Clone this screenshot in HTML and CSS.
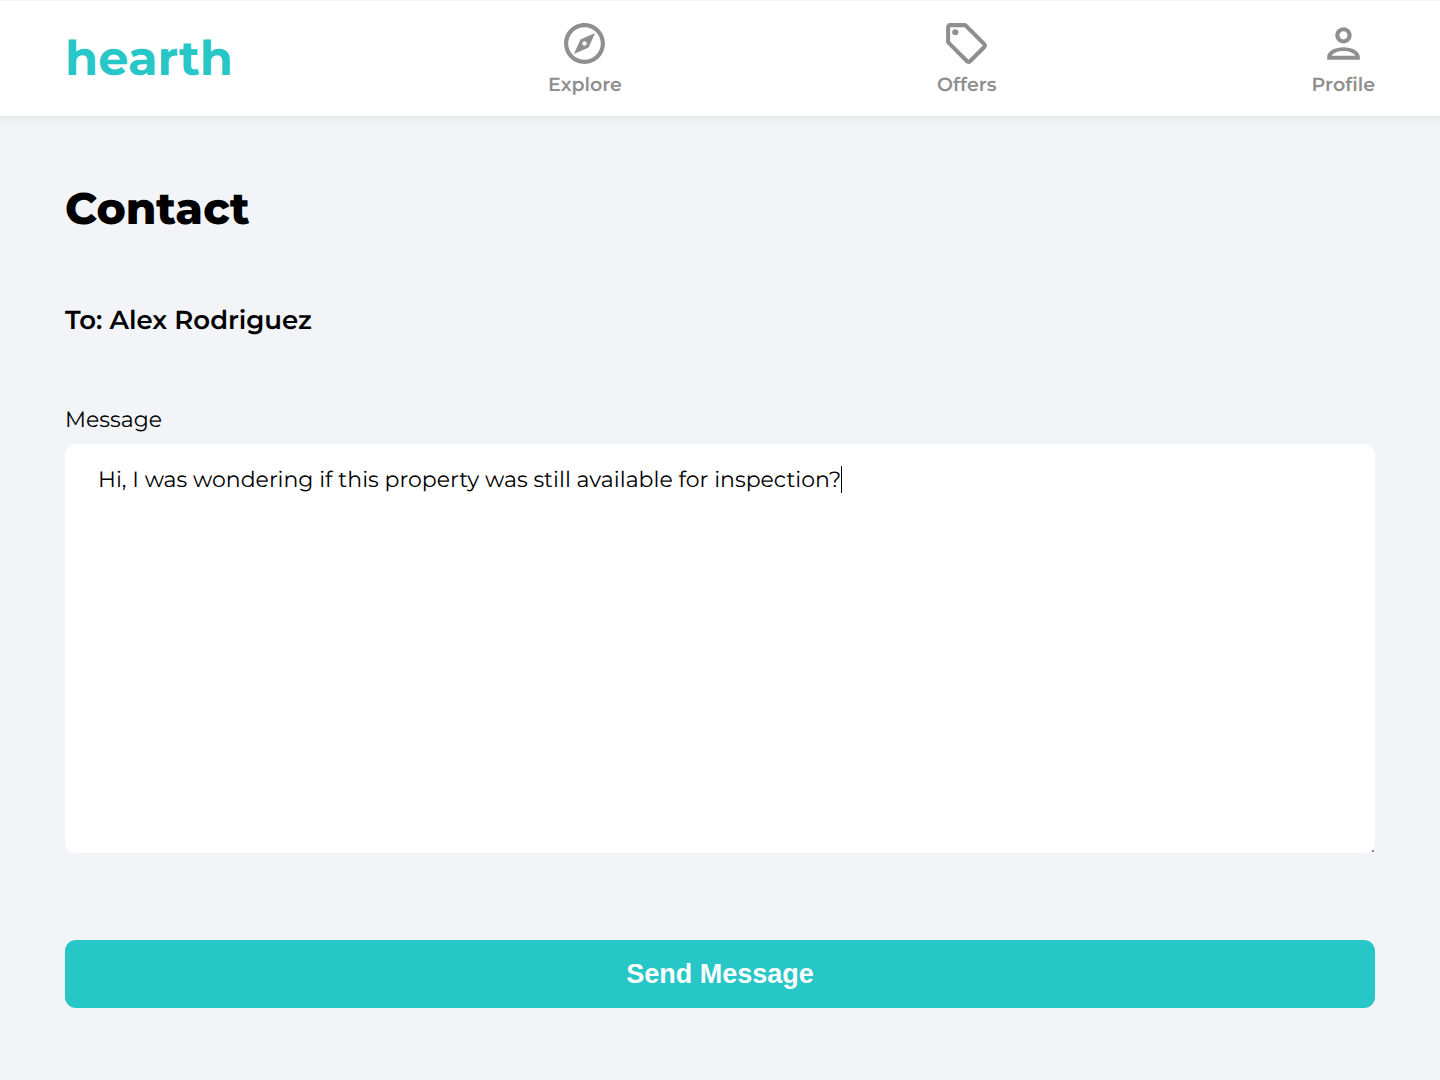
FILE: index.html
```html
<!DOCTYPE html>
<html lang="en">
<head>
<meta charset="utf-8">
<meta name="viewport" content="width=device-width, initial-scale=1">
<title>Contact | hearth</title>
<link rel="stylesheet" href="styles.css">
</head>
<body>
<header class="site-header">
  <a class="logo" href="#">hearth</a>
  <nav class="nav">
    <a class="nav-item" href="#explore">
      <svg class="nav-icon" viewBox="0 0 24 24" aria-hidden="true"><path d="M12 2C6.48 2 2 6.48 2 12s4.48 10 10 10 10-4.48 10-10S17.52 2 12 2zm0 18c-4.41 0-8-3.59-8-8s3.59-8 8-8 8 3.59 8 8-3.59 8-8 8zm-5.2-2.8l7.2-3.2L17.2 6.8 10 10 6.8 17.2zm5.2-6.3c.61 0 1.1.49 1.1 1.1s-.49 1.1-1.1 1.1-1.1-.49-1.1-1.1.49-1.1 1.1-1.1z"/></svg>
      <span>Explore</span>
    </a>
    <a class="nav-item" href="#offers">
      <svg class="nav-icon" viewBox="0 0 24 24" aria-hidden="true"><path d="M21.41 11.58l-9-9C12.05 2.22 11.55 2 11 2H4c-1.1 0-2 .9-2 2v7c0 .55.22 1.05.59 1.42l9 9c.36.36.86.58 1.41.58s1.05-.22 1.41-.59l7-7c.37-.36.59-.86.59-1.41s-.23-1.06-.59-1.42zM13 20.01L4 11V4h7v-.01l9 9-7 7.02z"/><circle cx="6.5" cy="6.5" r="1.5"/></svg>
      <span>Offers</span>
    </a>
    <a class="nav-item" href="#profile">
      <svg class="nav-icon" viewBox="0 0 24 24" aria-hidden="true"><path d="M12 6c1.1 0 2 .9 2 2s-.9 2-2 2-2-.9-2-2 .9-2 2-2m0 9.700c2.700 0 4.900.9 5.900 2.300H6.100c1-1.400 3.200-2.300 5.900-2.300M12 4C9.790 4 8 5.790 8 8s1.790 4 4 4 4-1.790 4-4-1.790-4-4-4zm0 9.800c-3.800 0-8 1.800-8 4.800V20h16v-1.400c0-3-4.200-4.800-8-4.800z"/></svg>
      <span>Profile</span>
    </a>
  </nav>
</header>
<main class="page">
  <h1 class="title">Contact</h1>
  <p class="recipient">To: Alex Rodriguez</p>
  <form class="form">
    <label class="label" for="message">Message</label>
    <div class="field">
      <textarea class="message" id="message">Hi, I was wondering if this property was still available for inspection?</textarea>
      <span class="caret"></span>
      <span class="grip"></span>
    </div>
    <button class="send" type="submit">Send Message</button>
  </form>
</main>
</body>
</html>
```
FILE: styles.css
```css
* { box-sizing: border-box; }
body {
  margin: 0;
  min-height: 100vh;
  background: #f2f4f8;
  color: #000;
  font-family: Montserrat, Inter, sans-serif;
  text-rendering: geometricPrecision;
}
.site-header {
  display: flex;
  justify-content: space-between;
  align-items: center;
  height: 116px;
  padding: 0 65px;
  background: #fff;
  border-top: 1px solid #f4f4f4;
  box-shadow: 0 2px 10px rgba(0, 0, 0, 0.08);
}
.logo {
  color: #27c6c7;
  font-size: 48px;
  font-weight: 700;
  line-height: 60px;
  text-decoration: none;
}
.nav { display: contents; }
.nav-item {
  display: flex;
  flex-direction: column;
  align-items: center;
  gap: 1px;
  padding-top: 2px;
  color: #8f8f8f;
  font-size: 19px;
  font-weight: 600;
  line-height: 32px;
  text-decoration: none;
}
.nav-icon {
  width: 49px;
  height: 49px;
  fill: currentColor;
}
.page { padding: 65px; }
.title {
  margin: 0;
  font-size: 44px;
  font-weight: 800;
  line-height: 56px;
}
.recipient {
  margin: 67px 0 68px;
  font-size: 26px;
  font-weight: 600;
  line-height: 32px;
}
.form {
  display: flex;
  flex-direction: column;
}
.label {
  margin-bottom: 8px;
  font-size: 22px;
  line-height: 32px;
}
.field {
  position: relative;
  display: flex;
}
.message {
  flex: 1;
  height: 409px;
  padding: 20px 33px;
  border: 0;
  border-radius: 11px;
  outline: 0;
  background: #fff;
  color: #000;
  font: inherit;
  font-size: 22px;
  line-height: 32px;
  text-rendering: inherit;
  resize: none;
}
.caret {
  position: absolute;
  top: 22px;
  left: 776px;
  width: 1px;
  height: 27px;
  background: #000;
}
.grip {
  position: absolute;
  right: 1px;
  bottom: 1px;
  width: 2px;
  height: 2px;
  background: #888;
}
.send {
  height: 68px;
  margin-top: 87px;
  border: 0;
  border-radius: 11px;
  background: #27c6c7;
  color: #fff;
  font-family: "Liberation Sans", sans-serif;
  font-size: 27px;
  font-weight: 700;
}
```
